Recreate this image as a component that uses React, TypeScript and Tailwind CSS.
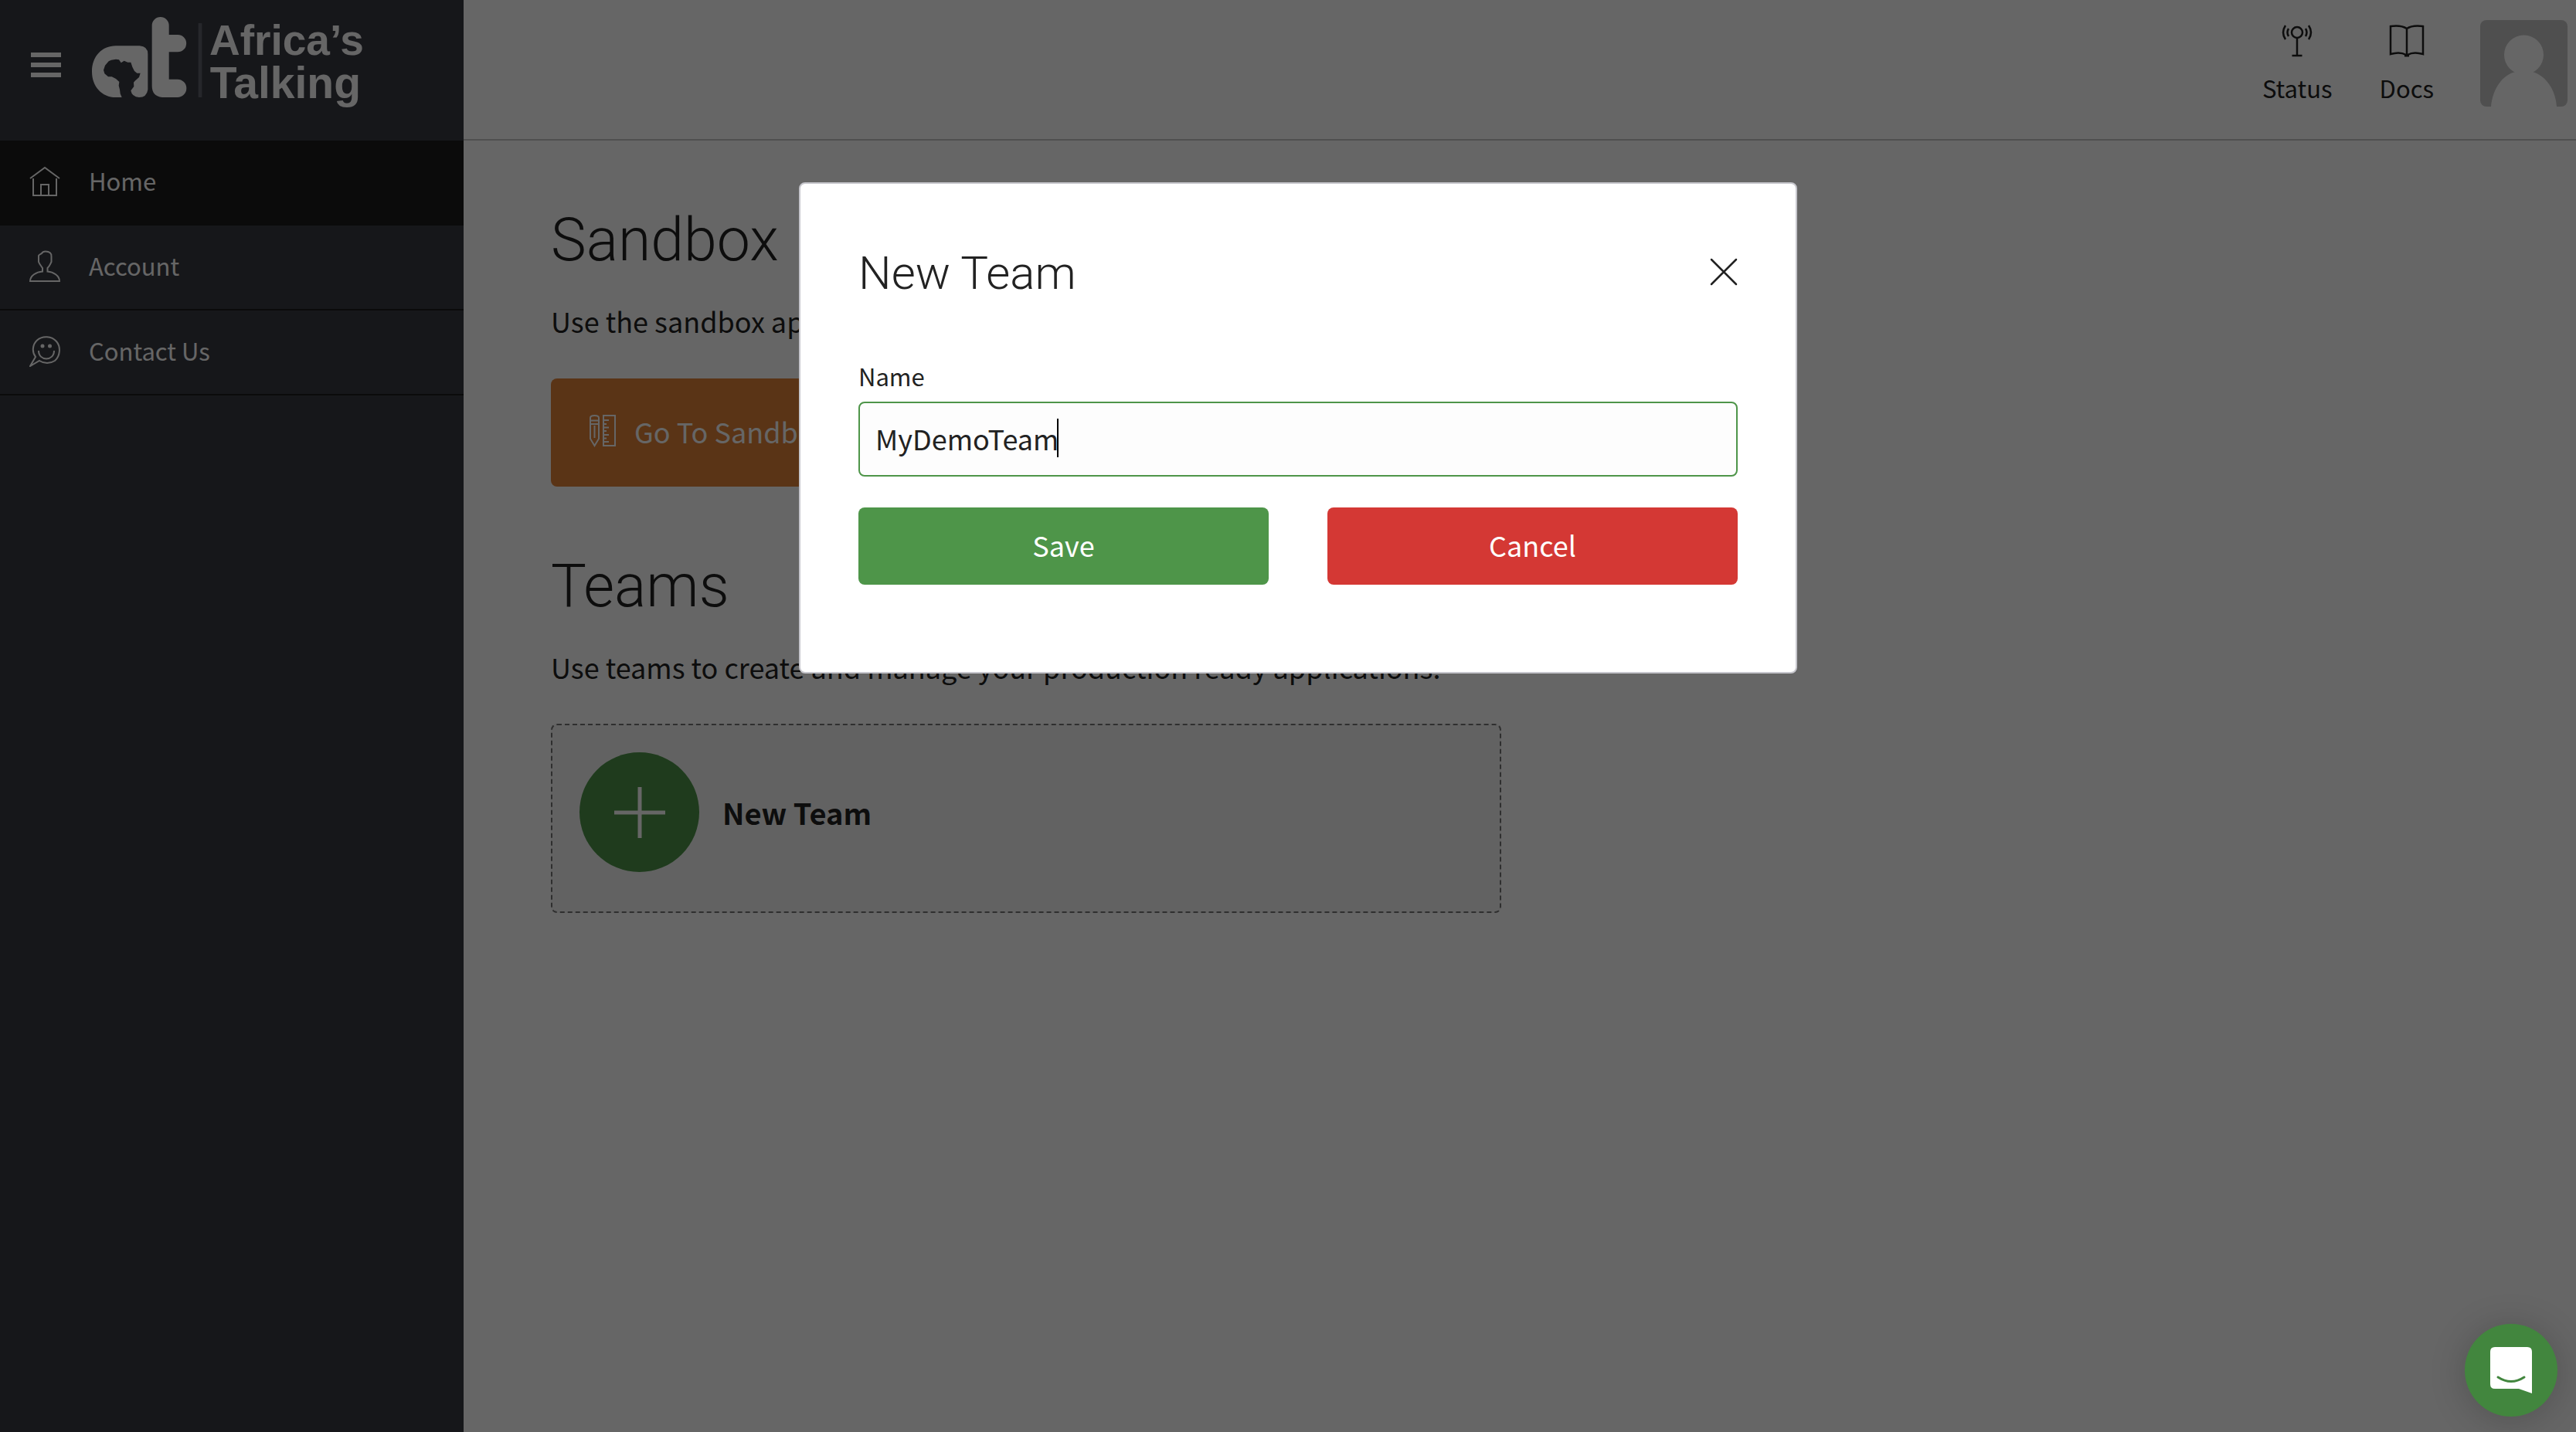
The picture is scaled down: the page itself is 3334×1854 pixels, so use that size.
import React, { useState } from 'react';

const SANS = "font-['Noto_Sans_CJK_SC','Noto_Sans',sans-serif]";

function Logo() {
  return (
    <svg viewBox="54 36 1068 372" className="h-[124px] w-[356px]" fill="#ffffff" role="img" aria-label="Africa's Talking">
      <path d="M173 348 H150 C95 348 57 305 57 248 C57 190 95 148 150 148 H242 Q274 150 274 180 V318 Q270 348 240 348 Q212 346 208 322 L220 306 L219 290 L224 284 L240 270 L245 254 L232 254 L222 246 L214 230 L208 212 L196 212 L182 206 L170 214 L162 202 L150 200 L132 203 L122 208 L108 224 L102 242 L106 256 L120 268 L134 268 L150 276 L163 288 L161 302 L165 318 L167 334 Z" />
      <path d="M290 69 A33 33 0 0 1 356 69 V105 H390 A33.500 33.500 0 0 1 390 172 H356 V278 H389 A35 35 0 0 1 389 348 H330 Q290 344 290 304 Z" />
      <rect x="470" y="60" width="14" height="288" fill="#5f626c" />
      <text x="513" y="184" fontSize="165" fontWeight="700" fontFamily="Liberation Sans, sans-serif">Africa’s</text>
      <text x="515" y="350" fontSize="171" fontWeight="700" fontFamily="Liberation Sans, sans-serif">Talking</text>
    </svg>
  );
}

function HomeIcon() {
  return (
    <svg viewBox="0 0 40 40" className="size-10 shrink-0" fill="none" stroke="currentColor" strokeWidth="2" aria-hidden="true">
      <path d="M1 16 L20 2 L39 16" />
      <path d="M5 16 V38 H35 V16" />
      <path d="M15 38 V24 H25 V38" />
    </svg>
  );
}

function UserIcon() {
  return (
    <svg viewBox="0 0 40 42" className="h-[42px] w-10 shrink-0" fill="none" stroke="currentColor" strokeWidth="2" aria-hidden="true">
      <path d="M1 40 C1 33 9 28 17 27.500 V23 C15 20 13 18 12 15 V7 C13 5 15 5 16 4 C17 2 19 1.500 21 1.500 C26 1.500 29 4 28.500 8 V15 C27 18 26 21 23.500 23 V27.500 C31 28 39 33 39 40 Z" />
    </svg>
  );
}

function SmileIcon() {
  return (
    <svg viewBox="0 0 40 40" className="size-10 shrink-0" fill="none" stroke="currentColor" strokeWidth="2" aria-hidden="true">
      <path d="M8 27 C3 21 4 11 10 5.500 C17 -1 29 0 35 7 C41 14 40 26 33 32 C27 36 19 36 13 32 L1 39 Z" />
      <path d="M12 19 C12 33 32 33 32 19" />
      <circle cx="17" cy="13" r="2.500" fill="currentColor" stroke="none" />
      <circle cx="26.500" cy="13" r="2.500" fill="currentColor" stroke="none" />
    </svg>
  );
}

function StatusIcon() {
  return (
    <svg viewBox="0 0 44 44" className="size-11" fill="none" stroke="currentColor" strokeWidth="2.500" aria-hidden="true">
      <circle cx="22" cy="12" r="7" />
      <path d="M22 19 V42 M15.500 42 H28.500" />
      <path d="M11 7 Q8 12 11 17 M33 7 Q36 12 33 17 M7 3 Q1 12 7 21 M37 3 Q43 12 37 21" />
    </svg>
  );
}

function BookIcon() {
  return (
    <svg viewBox="0 0 46 44" className="h-11 w-[46px]" fill="none" stroke="currentColor" strokeWidth="2.500" aria-hidden="true">
      <path d="M23 7 C17 3 9 3 2 4 V40 C9 38 17 38 22 41 H24 C29 38 37 38 44 40 V4 C37 3 29 3 23 7 V42" />
      <path d="M20 42 H26" strokeWidth="3" />
    </svg>
  );
}

function ToolsIcon() {
  return (
    <svg viewBox="0 0 34 42" className="h-[42px] w-[34px] shrink-0" fill="none" stroke="currentColor" strokeWidth="2" aria-hidden="true">
      <path d="M1 4 Q1 1 6.500 1 Q12 1 12 4 V31 L6.500 40 L1 31 Z M1 7.500 H12 M1 12 H12 M6.500 14 V30" />
      <path d="M18 1 H33 V40 H18 Z M18 7 H25 M18 12 H22 M18 16.500 H25 M18 21 H22 M18 26 H25 M18 30.500 H22 M18 35 H25" />
    </svg>
  );
}

const NAV = [
  { label: 'Home', icon: <HomeIcon />, active: true },
  { label: 'Account', icon: <UserIcon />, active: false },
  { label: 'Contact Us', icon: <SmileIcon />, active: false },
];

function Sidebar() {
  return (
    <aside className="flex w-[600px] shrink-0 flex-col bg-[#393a43] text-white">
      <div className="flex h-[182px] items-start gap-[39px] pl-10">
        <button type="button" aria-label="Toggle menu" className="mt-[68px] flex w-[39px] flex-col gap-[7px]">
          <span className="h-[6px] bg-white" />
          <span className="h-[6px] bg-white" />
          <span className="h-[6px] bg-white" />
        </button>
        <a href="#home" className="mt-[22px]">
          <Logo />
        </a>
      </div>
      <nav>
        <ul>
          {NAV.map((item) => (
            <li key={item.label}>
              <a
                href="#nav"
                className={
                  item.active
                    ? 'flex h-[110px] items-center gap-[37px] border-b-2 border-[#1c1c1c] bg-[#1c1c1c] pb-[3px] pl-[38px] text-[31px]'
                    : 'flex h-[110px] items-center gap-[37px] border-b-2 border-[#1c1c1c] pb-[3px] pl-[38px] text-[31px]'
                }
              >
                {item.icon}
                <span>{item.label}</span>
              </a>
            </li>
          ))}
        </ul>
      </nav>
    </aside>
  );
}

function Header() {
  return (
    <header className="flex h-[182px] items-start justify-end border-b-2 border-[#c6c6c6] pt-[26px] pr-[11px]">
      <a href="#status" className="mt-1 flex flex-col items-center gap-4 text-[31px] leading-[48px]">
        <StatusIcon />
        Status
      </a>
      <a href="#docs" className="mt-1 ml-[61px] flex flex-col items-center gap-4 text-[31px] leading-[48px]">
        <BookIcon />
        Docs
      </a>
      <button type="button" aria-label="Profile" className="ml-[60px] h-28 w-[113px] overflow-hidden rounded-lg bg-[#c6c6c6]">
        <svg viewBox="0 0 113 112" className="size-full" fill="#ffffff" aria-hidden="true">
          <circle cx="56.500" cy="45" r="25.500" />
          <path d="M14 112 C16 88 30 70 46 67 H68 C84 72 97 88 99 112 Z" />
        </svg>
      </button>
    </header>
  );
}

function NewTeamDialog() {
  const [name, setName] = useState('MyDemoTeam');
  return (
    <div className="fixed inset-0 flex items-start justify-center bg-black/60 pt-[236px] pl-[26px]">
      <form
        role="dialog"
        aria-modal="true"
        aria-labelledby="dialog-title"
        onSubmit={(e) => e.preventDefault()}
        className="flex w-[1292px] flex-col rounded-lg border-2 border-[#c6c6cc] bg-white px-[75px] pt-[72px] pb-[113px] text-[#222222]"
      >
        <div className="flex items-center justify-between">
          <h2 id="dialog-title" className="pt-1 font-[Roboto] text-[60px] leading-[80px] font-light">New Team</h2>
          <button type="button" aria-label="Close">
            <svg viewBox="0 0 36 36" className="size-9" stroke="currentColor" strokeWidth="2.500" strokeLinecap="round" aria-hidden="true">
              <path d="M2 2 L34 34 M34 2 L2 34" />
            </svg>
          </button>
        </div>
        <label htmlFor="team-name" className="mt-[69px] text-[31px] leading-[48px]">Name</label>
        <div className="relative mt-[9px]">
          <input
            id="team-name"
            type="text"
            value={name}
            onChange={(e) => setName(e.target.value)}
            className="h-[97px] w-full rounded-lg border-2 border-[#4e9549] bg-[#fdfdfd] px-5 pb-1 text-[36px] caret-transparent outline-none"
          />
          <div aria-hidden="true" className="pointer-events-none absolute inset-0 flex items-center pb-1 pl-5 text-[36px]">
            <span className="invisible">{name}</span>
            <span className="h-[50px] w-[2px] bg-black" />
          </div>
        </div>
        <div className="mt-10 grid grid-cols-2 gap-[76px] text-[36px] text-white">
          <button type="submit" className="h-[100px] rounded-lg bg-[#4e9549] pb-1">Save</button>
          <button type="button" className="h-[100px] rounded-lg bg-[#d43834] pb-1">Cancel</button>
        </div>
      </form>
    </div>
  );
}

export default function App() {
  return (
    <div className={`flex min-h-screen bg-white text-[#222222] ${SANS}`}>
      <Sidebar />
      <div className="flex min-w-0 grow flex-col">
        <Header />
        <main className="flex flex-col items-start pt-[81px] pl-[113px]">
          <h1 className="font-[Roboto] text-[77px] leading-[96px] font-light">Sandbox</h1>
          <p className="mt-7 text-[36px] leading-[56px]">Use the sandbox application to test your ideas.</p>
          <a href="#sandbox" className="mt-[47px] flex h-[140px] items-center gap-6 rounded-lg bg-[#e18237] px-[50px] pb-1 text-[36px] text-white">
            <ToolsIcon />
            Go To Sandbox App
          </a>
          <h1 className="mt-[81px] font-[Roboto] text-[77px] leading-[96px] font-light">Teams</h1>
          <p className="mt-7 text-[36px] leading-[56px]">Use teams to create and manage your production ready applications.</p>
          <button type="button" className="mt-[46px] flex h-[245px] w-[1230px] items-start gap-[30px] rounded-lg border-2 border-dashed border-[#767676] bg-[#f5f5f5] px-[35px] pt-[35px]">
            <span className="flex size-[155px] items-center justify-center rounded-full bg-[#4e9549] text-white">
              <svg viewBox="0 0 66 66" className="size-[66px]" stroke="currentColor" strokeWidth="5" aria-hidden="true">
                <path d="M33 0 V66 M0 33 H66" />
              </svg>
            </span>
            <span className="text-[38px] leading-[155px] font-bold">New Team</span>
          </button>
        </main>
      </div>
      <NewTeamDialog />
      <button type="button" aria-label="Open chat" className="fixed right-6 bottom-5 flex size-[120px] items-center justify-center rounded-full bg-[#42863e] shadow-[0_4px_48px_rgba(0,0,0,0.2)]">
        <svg viewBox="0 0 54 62" className="h-[62px] w-[54px]" aria-hidden="true">
          <path fill="#ffffff" d="M6 1 H48 Q54 1 54 7 V61 L37 55 H6 Q0 55 0 49 V7 Q0 1 6 1 Z" />
          <path fill="none" stroke="#42863e" strokeWidth="3" strokeLinecap="round" d="M10 40 Q27 51 44 40" />
        </svg>
      </button>
    </div>
  );
}
